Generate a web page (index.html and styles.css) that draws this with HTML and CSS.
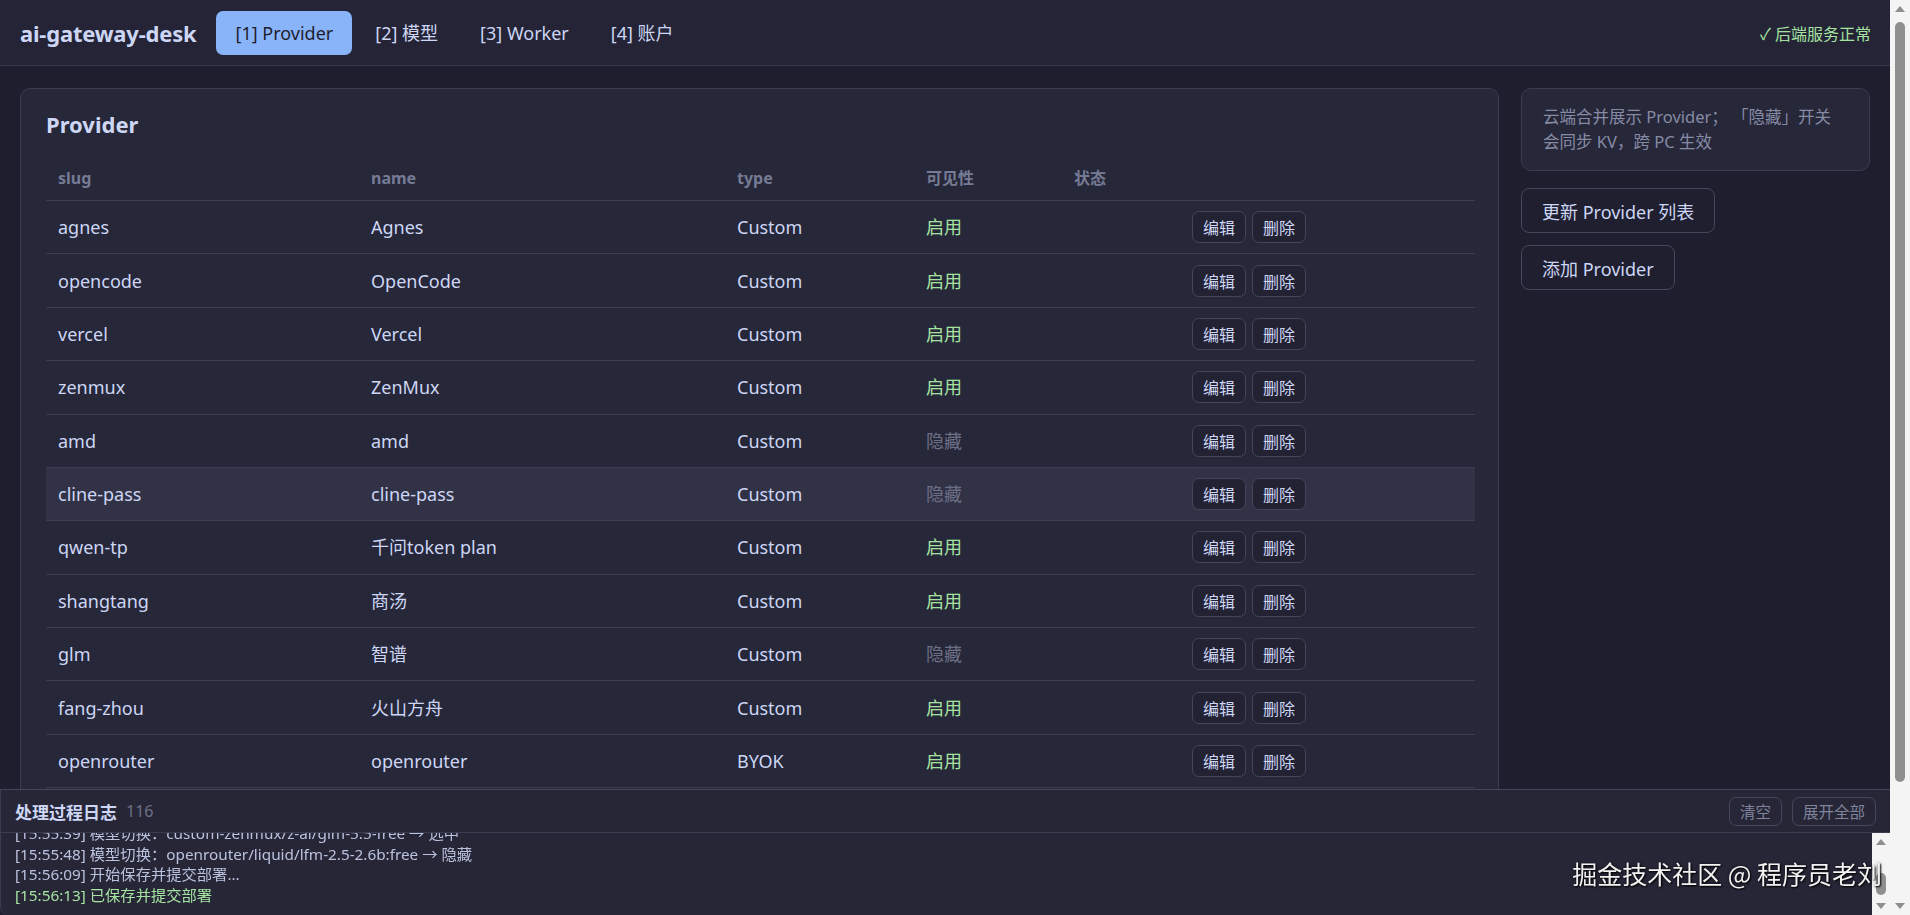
FILE: index.html
```html
<!DOCTYPE html>
<html lang="zh-CN">
<head>
<meta charset="utf-8">
<title>ai-gateway-desk</title>
<link rel="stylesheet" href="styles.css">
</head>
<body>
<header class="topbar">
  <div class="brand">ai-gateway-desk</div>
  <nav class="tabs">
    <a class="tab active">[1] Provider</a>
    <a class="tab">[2] 模型</a>
    <a class="tab">[3] Worker</a>
    <a class="tab">[4] 账户</a>
  </nav>
  <div class="status">✓ 后端服务正常</div>
</header>

<main class="layout">
  <section class="card">
    <h2 class="card-title">Provider</h2>
    <table class="grid">
      <colgroup>
        <col class="col-slug"><col class="col-name"><col class="col-type"><col class="col-vis"><col class="col-state"><col class="col-act">
      </colgroup>
      <thead>
        <tr><th>slug</th><th>name</th><th>type</th><th>可见性</th><th>状态</th><th></th></tr>
      </thead>
      <tbody>
        <tr><td>agnes</td><td>Agnes</td><td>Custom</td><td class="on">启用</td><td></td><td class="acts"><button class="mini">编辑</button><button class="mini">删除</button></td></tr>
        <tr><td>opencode</td><td>OpenCode</td><td>Custom</td><td class="on">启用</td><td></td><td class="acts"><button class="mini">编辑</button><button class="mini">删除</button></td></tr>
        <tr><td>vercel</td><td>Vercel</td><td>Custom</td><td class="on">启用</td><td></td><td class="acts"><button class="mini">编辑</button><button class="mini">删除</button></td></tr>
        <tr><td>zenmux</td><td>ZenMux</td><td>Custom</td><td class="on">启用</td><td></td><td class="acts"><button class="mini">编辑</button><button class="mini">删除</button></td></tr>
        <tr><td>amd</td><td>amd</td><td>Custom</td><td class="off">隐藏</td><td></td><td class="acts"><button class="mini">编辑</button><button class="mini">删除</button></td></tr>
        <tr class="hover"><td>cline-pass</td><td>cline-pass</td><td>Custom</td><td class="off">隐藏</td><td></td><td class="acts"><button class="mini">编辑</button><button class="mini">删除</button></td></tr>
        <tr><td>qwen-tp</td><td>千问token plan</td><td>Custom</td><td class="on">启用</td><td></td><td class="acts"><button class="mini">编辑</button><button class="mini">删除</button></td></tr>
        <tr><td>shangtang</td><td>商汤</td><td>Custom</td><td class="on">启用</td><td></td><td class="acts"><button class="mini">编辑</button><button class="mini">删除</button></td></tr>
        <tr><td>glm</td><td>智谱</td><td>Custom</td><td class="off">隐藏</td><td></td><td class="acts"><button class="mini">编辑</button><button class="mini">删除</button></td></tr>
        <tr><td>fang-zhou</td><td>火山方舟</td><td>Custom</td><td class="on">启用</td><td></td><td class="acts"><button class="mini">编辑</button><button class="mini">删除</button></td></tr>
        <tr><td>openrouter</td><td>openrouter</td><td>BYOK</td><td class="on">启用</td><td></td><td class="acts"><button class="mini">编辑</button><button class="mini">删除</button></td></tr>
        <tr><td>nvidia</td><td>NVIDIA</td><td>BYOK</td><td class="on">启用</td><td></td><td class="acts"><button class="mini">编辑</button><button class="mini">删除</button></td></tr>
        <tr><td>groq</td><td>Groq</td><td>BYOK</td><td class="off">隐藏</td><td></td><td class="acts"><button class="mini">编辑</button><button class="mini">删除</button></td></tr>
      </tbody>
    </table>
  </section>

  <aside class="side">
    <div class="note">云端合并展示 Provider； 「隐藏」开关<br>会同步 KV，跨 PC 生效</div>
    <button class="btn">更新 Provider 列表</button>
    <button class="btn">添加 Provider</button>
  </aside>
</main>

<section class="log">
  <div class="log-head">
    <span class="log-title">处理过程日志</span>
    <span class="log-count">116</span>
    <div class="log-actions">
      <button class="ghost">清空</button>
      <button class="ghost">展开全部</button>
    </div>
  </div>
  <div class="log-main">
    <div class="log-body">
      <div class="log-lines">
        <div class="line">[15:55:39] 模型切换：custom-zenmux/z-ai/glm-5.5-free → 选中</div>
        <div class="line">[15:55:48] 模型切换：openrouter/liquid/lfm-2.5-2.6b:free → 隐藏</div>
        <div class="line">[15:56:09] 开始保存并提交部署...</div>
        <div class="line ok">[15:56:13] 已保存并提交部署</div>
      </div>
    </div>
    <div class="vscroll small">
      <span class="arrow up"></span>
      <span class="gap"></span>
      <span class="thumb"></span>
      <span class="arrow down"></span>
    </div>
  </div>
</section>

<div class="vscroll page">
  <span class="arrow up"></span>
  <span class="thumb"></span>
  <span class="gap"></span>
  <span class="arrow down"></span>
</div>

<div class="watermark">掘金技术社区 @ 程序员老刘</div>
</body>
</html>
```

FILE: styles.css
```css
* { box-sizing: border-box; }

html {
  background: #1e1e2e;
}

body {
  margin: 0;
  background: #1e1e2e;
  color: #cdd6f4;
  font-family: "Noto Sans", "Noto Sans CJK SC", sans-serif;
  padding: 0 20px 130px 0;
}

/* top bar */
.topbar {
  height: 66px;
  display: flex;
  align-items: center;
  padding: 0 19px 0 20px;
  background: #242436;
  border-bottom: 1px solid #383a4f;
}

.brand {
  font-size: 22px;
  font-weight: 700;
  letter-spacing: -0.2px;
  color: #cdd6f4;
  margin-right: 20px;
}

.tabs {
  display: flex;
  gap: 4px;
}

.tab {
  display: block;
  padding: 0 19px;
  height: 44px;
  line-height: 44px;
  font-size: 18px;
  border-radius: 7px;
  color: #cdd6f4;
}

.tab.active {
  background: #89b4fa;
  color: #1e1e2e;
}

.status {
  margin-left: auto;
  font-size: 16px;
  color: #a6e3a1;
}

/* layout */
.layout {
  display: grid;
  grid-template-columns: 1fr 349px;
  gap: 22px;
  padding: 22px 20px 0 20px;
  align-items: start;
}

.card {
  background: #262739;
  border: 1px solid #3a3c52;
  border-radius: 10px;
  padding: 20px 23px 20px 25px;
}

.card-title {
  margin: 0 0 13px 0;
  font-size: 22px;
  line-height: 30px;
  font-weight: 700;
  color: #cdd6f4;
}

.grid {
  width: 100%;
  table-layout: fixed;
  border-collapse: separate;
  border-spacing: 0;
}

.col-slug { width: 313px; }
.col-name { width: 366px; }
.col-type { width: 189px; }
.col-vis { width: 148px; }
.col-state { width: 118px; }

.grid th {
  text-align: left;
  font-size: 16px;
  font-weight: 700;
  line-height: 20px;
  color: #767b95;
  padding: 16px 12px 12px 12px;
  border-bottom: 1px solid #3b3d53;
}

.grid td {
  font-size: 18px;
  line-height: 24px;
  padding: 10.2px 12px;
  vertical-align: middle;
  border-bottom: 1px solid #3b3d53;
  white-space: nowrap;
  color: #cdd6f4;
}

.grid tr.hover td {
  background: #313246;
}

.grid td.on { color: #a6e3a1; }
.grid td.off { color: #6c7086; }

.mini {
  height: 32px;
  padding: 0 10px;
  font-family: "Noto Sans", "Noto Sans CJK SC", sans-serif;
  font-size: 16px;
  color: #cdd6f4;
  background: #222233;
  border: 1px solid #43455a;
  border-radius: 7px;
}

.grid td.acts .mini + .mini { margin-left: 6px; }

/* side */
.side {
  display: flex;
  flex-direction: column;
  align-items: flex-start;
}

.note {
  width: 100%;
  background: #262739;
  border: 1px solid #3a3c52;
  border-radius: 10px;
  padding: 15px 12px 16px 21px;
  font-size: 16.5px;
  line-height: 25px;
  color: #868ba5;
  margin-bottom: 17px;
}

.btn {
  height: 45px;
  padding: 0 20px;
  font-family: "Noto Sans", "Noto Sans CJK SC", sans-serif;
  font-size: 18px;
  color: #cdd6f4;
  background: #1f1f30;
  border: 1px solid #45475a;
  border-radius: 8px;
  margin-bottom: 12px;
}

/* log panel */
.log {
  position: fixed;
  left: 0;
  right: 20px;
  bottom: 0;
  height: 126px;
  background: #262637;
  border-top: 1px solid #44465b;
  border-left: 1px solid #3a3c52;
  border-bottom-left-radius: 8px;
  display: flex;
  flex-direction: column;
}

.log-head {
  height: 43px;
  flex: none;
  display: flex;
  align-items: center;
  padding: 0 14px 0 14px;
  border-bottom: 1px solid #3a3c52;
}

.log-title {
  font-size: 17px;
  font-weight: 700;
  color: #cdd6f4;
}

.log-count {
  margin-left: 9px;
  font-size: 16px;
  color: #6c7086;
}

.log-actions {
  margin-left: auto;
  display: flex;
  gap: 10px;
}

.ghost {
  height: 29px;
  padding: 0 10px;
  font-family: "Noto Sans", "Noto Sans CJK SC", sans-serif;
  font-size: 15.5px;
  color: #7f849c;
  background: transparent;
  border: 1px solid #44465b;
  border-radius: 7px;
}

.log-main {
  flex: 1;
  min-height: 0;
  display: flex;
}

.log-body {
  flex: 1;
  overflow: hidden;
  display: flex;
  flex-direction: column-reverse;
  padding: 0 14px;
}

.log-lines {
  padding-bottom: 10px;
}

.line {
  font-size: 15.3px;
  line-height: 20.5px;
  color: #bac2de;
  white-space: nowrap;
}

.line.ok { color: #a6e3a1; }

/* decorative scrollbars (classic style) */
.vscroll {
  display: flex;
  flex-direction: column;
  align-items: center;
  background: #f4f4f4;
}

.vscroll.page {
  position: fixed;
  top: 0;
  right: 0;
  bottom: 0;
  width: 20px;
}

.vscroll.small {
  width: 18px;
  flex: none;
}

.vscroll .arrow {
  flex: none;
  width: 0;
  height: 0;
  border-left: 5px solid transparent;
  border-right: 5px solid transparent;
  margin: 6px 0;
}

.vscroll .arrow.up { border-bottom: 6px solid #8e8e8e; }
.vscroll .arrow.down { border-top: 6px solid #8e8e8e; }

.vscroll .thumb {
  flex: none;
  width: 10px;
  border-radius: 5px;
  background: #8f8f8f;
}

.vscroll.page .thumb { height: 760px; margin-top: 4px; }
.vscroll.small .thumb { height: 22px; margin-bottom: 2px; }

.vscroll .gap { flex: 1; }

.watermark {
  position: fixed;
  right: 28px;
  bottom: 24px;
  font-family: "Noto Sans CJK SC", sans-serif;
  font-size: 25px;
  color: #f2f2f2;
  text-shadow: 1px 1px 2px #000, 0 0 3px rgba(0,0,0,0.6);
  pointer-events: none;
}
```
